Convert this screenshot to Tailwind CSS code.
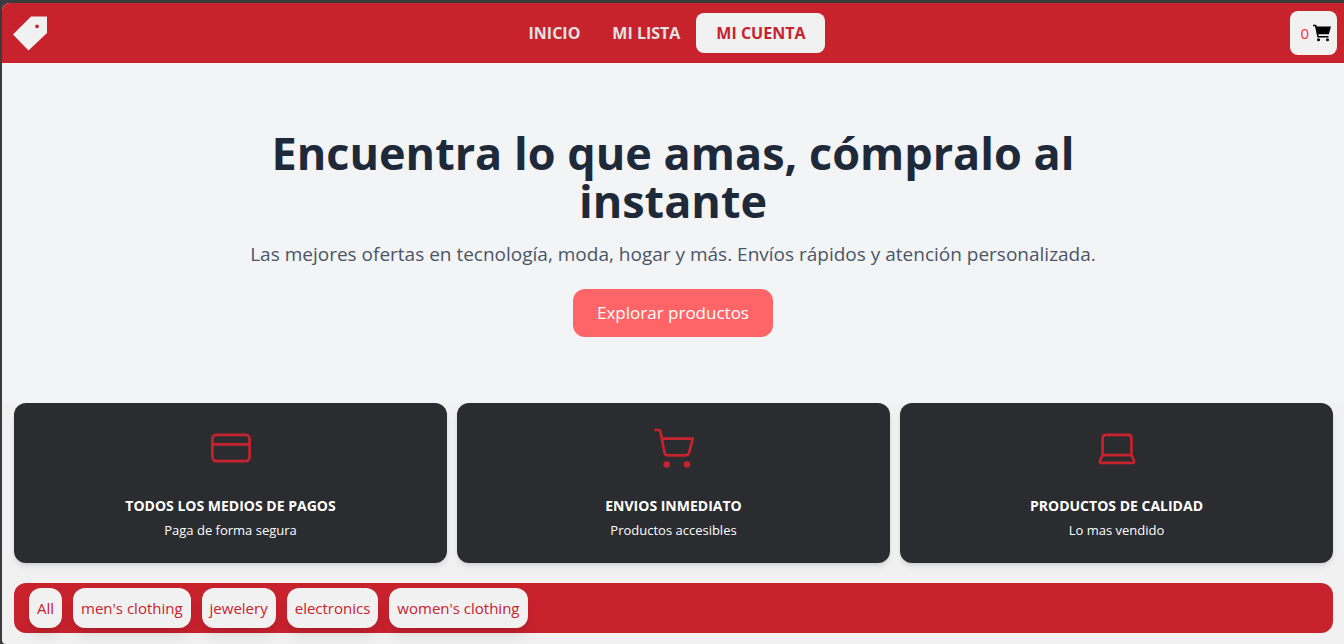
<!DOCTYPE html>
<html lang="es">
<head>
<meta charset="utf-8">
<meta name="viewport" content="width=device-width, initial-scale=1">
<title>Tienda</title>
<script src="https://cdn.jsdelivr.net/npm/@tailwindcss/browser@4"></script>
</head>
<body class="bg-[#3b3b3d] pt-[3px] pl-[2px] font-['Open_Sans','Noto_Sans',sans-serif] text-[15px]">
<div class="flex min-h-[calc(100vh-3px)] flex-col overflow-hidden rounded-tl-lg rounded-bl-sm bg-[#f1f1f1]">
  <header class="flex h-[60px] items-center justify-between bg-[#c8222d] pr-[7px] pl-[11px]">
    <a href="#" aria-label="Inicio de la tienda" class="w-[35px]">
      <svg viewBox="0 0 35 35" class="size-[35px]" fill="#f1f1f1"><path fill-rule="evenodd" d="M18 .5h16V17L15.500 34.500 0 18.500zM24 8.400a1.900 1.900 0 1 0 0 3.800 1.900 1.900 0 0 0 0-3.800z"/></svg>
    </a>
    <nav class="flex items-center text-base font-bold text-[#e2e2e2]">
      <a href="#" class="px-4">INICIO</a>
      <a href="#" class="px-4">MI LISTA</a>
      <a href="#" class="flex h-10 items-center rounded-lg bg-[#f1f1f1] px-5 text-[#c8222d]">MI CUENTA</a>
    </nav>
    <button type="button" aria-label="Carrito, 0 productos" class="flex h-11 w-[47px] items-center justify-end gap-1 rounded-lg bg-[#f1f1f1] pr-[6px] text-[#fb2c36]">
      <span>0</span>
      <svg viewBox="0 0 18 18" class="size-[18px]" fill="#000"><path d="M0 .8h3.200l.6 1.800H18l-2.200 7.600H5.300l.4 1.800H15.500v1.600H4.400L2 2.300H0z"/><circle cx="5.500" cy="15.700" r="1.500"/><circle cx="14.500" cy="15.700" r="1.500"/></svg>
    </button>
  </header>
  <main>
    <section class="flex flex-col items-center bg-[#f3f4f6] px-6 pt-[66px] pb-[66px] text-center">
      <h1 class="max-w-[896px] text-[45px] leading-12 font-bold text-[#1e2939]">Encuentra lo que amas, cómpralo al<br>instante</h1>
      <p class="mt-[15px] text-[19px] leading-7 text-[#4a5565]">Las mejores ofertas en tecnología, moda, hogar y más. Envíos rápidos y atención personalizada.</p>
      <button type="button" class="mt-[21px] h-12 rounded-xl bg-[#ff6467] px-6 text-[17px] text-white">Explorar productos</button>
    </section>
    <section class="grid grid-cols-3 gap-[10px] pr-[11px] pl-3 text-center text-[13px] leading-6 text-white">
      <article class="flex h-40 flex-col items-center rounded-xl bg-[#2b2c30] pt-5 shadow-md">
        <svg viewBox="0 0 48 48" class="size-12" fill="none" stroke="#c8222d" stroke-width="2.700"><rect x="5.400" y="11.900" width="37.200" height="26.200" rx="4"/><path d="M5.400 21.400h37.200"/></svg>
        <h2 class="mt-[23px] text-[14px] font-bold">TODOS LOS MEDIOS DE PAGOS</h2>
        <p>Paga de forma segura</p>
      </article>
      <article class="flex h-40 flex-col items-center rounded-xl bg-[#2b2c30] pt-5 shadow-md">
        <svg viewBox="0 0 48 48" class="size-12" fill="none" stroke="#c8222d" stroke-width="2.700" stroke-linecap="round" stroke-linejoin="round"><path d="M5.500 7h3.300q1.300 0 1.600 1.300L14.500 29.500Q15 32.300 18 32.300H35.500Q38.500 32.300 39.200 29.500L42.800 15.700H12"/><g fill="#c8222d" stroke="none"><circle cx="16.700" cy="41.500" r="3.300"/><circle cx="37" cy="41.500" r="3.300"/></g></svg>
        <h2 class="mt-[23px] text-[14px] font-bold">ENVIOS INMEDIATO</h2>
        <p>Productos accesibles</p>
      </article>
      <article class="flex h-40 flex-col items-center rounded-xl bg-[#2b2c30] pt-5 shadow-md">
        <svg viewBox="0 0 48 48" class="size-12" fill="none" stroke="#c8222d" stroke-width="2.700" stroke-linejoin="round"><path d="M9.600 32.200V15.200q0-3.300 3.300-3.300h22.200q3.300 0 3.300 3.300v17zL7 37.500Q6.200 39.800 8.500 39.800h31Q41.800 39.800 41 37.500L38.400 32.200"/></svg>
        <h2 class="mt-[23px] text-[14px] font-bold">PRODUCTOS DE CALIDAD</h2>
        <p>Lo mas vendido</p>
      </article>
    </section>
    <nav aria-label="Categorías" class="mt-5 mr-[11px] ml-3 flex h-[50px] items-center gap-[11px] rounded-xl bg-[#c8222d] px-[15px] text-[15px] text-[#c8222d]">
      <button type="button" class="h-10 rounded-xl bg-[#f1f1f1] px-2 shadow-lg">All</button>
      <button type="button" class="h-10 rounded-xl bg-[#f1f1f1] px-2 shadow-lg">men's clothing</button>
      <button type="button" class="h-10 rounded-xl bg-[#f1f1f1] px-2 shadow-lg">jewelery</button>
      <button type="button" class="h-10 rounded-xl bg-[#f1f1f1] px-2 shadow-lg">electronics</button>
      <button type="button" class="h-10 rounded-xl bg-[#f1f1f1] px-2 shadow-lg">women's clothing</button>
    </nav>
  </main>
</div>
</body>
</html>
